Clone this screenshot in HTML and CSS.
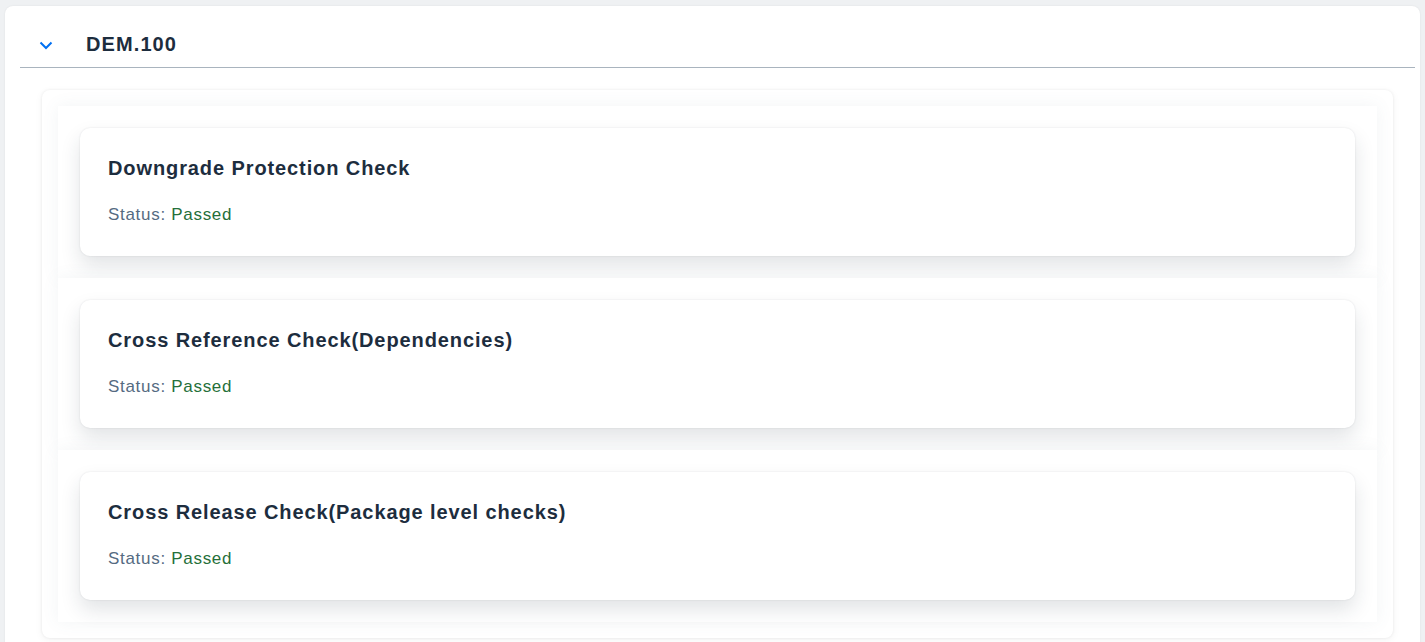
FILE: index.html
```html
<!DOCTYPE html>
<html>
<head>
<meta charset="utf-8">
<link rel="stylesheet" href="styles.css">
</head>
<body>
<div class="panel">
  <div class="header">
    <span class="chev"><svg width="14" height="10" viewBox="0 0 14 10"><path d="M1.5 2.5 L7 8 L12.5 2.5" fill="none" stroke="#0070f2" stroke-width="2"/></svg></span>
    <span class="title">DEM.100</span>
  </div>
  <div class="list">
    <div class="item">
      <div class="card">
        <div class="card-title">Downgrade Protection Check</div>
        <div class="status">Status: <span class="ok">Passed</span></div>
      </div>
    </div>
    <div class="item">
      <div class="card">
        <div class="card-title">Cross Reference Check(Dependencies)</div>
        <div class="status">Status: <span class="ok">Passed</span></div>
      </div>
    </div>
    <div class="item">
      <div class="card">
        <div class="card-title">Cross Release Check(Package level checks)</div>
        <div class="status">Status: <span class="ok">Passed</span></div>
      </div>
    </div>
  </div>
</div>
</body>
</html>
```
FILE: styles.css
```css
html, body {
  margin: 0;
  padding: 0;
  background: #eff1f3;
  font-family: "Liberation Sans", Arial, sans-serif;
  color: #1d2d3e;
  height: 642px;
  overflow: hidden;
}
body {
  padding: 6px 5px 0 5px;
}
.panel {
  background: #ffffff;
  border-radius: 8px;
  box-shadow: 0 0 2px rgba(0,0,0,0.08);
  padding: 0 5px 20px 15px;
}
.header {
  display: flex;
  align-items: center;
  height: 46px;
  padding-top: 15px;
  border-bottom: 1px solid #a9b4be;
}
.chev {
  display: flex;
  width: 22px;
  margin-left: 19px;
  margin-top: 1px;
}
.title {
  margin-left: 25px;
  font-size: 20px;
  font-weight: bold;
  letter-spacing: 1.1px;
  color: #1d2d3e;
}
.list {
  margin: 22px 22px 0 22px;
  padding: 16px;
  background: #fff;
  border-radius: 8px;
  box-shadow: 0 0 3px rgba(0,0,0,0.07), 0 2px 8px rgba(0,0,0,0.05);
  display: flex;
  flex-direction: column;
}
.item {
  padding: 22px;
  background: #fff;
  box-shadow: 0 0 16px rgba(90,110,130,0.08);
}
.card {
  background: #fff;
  border-radius: 10px;
  padding: 27px 28px 28px 28px;
  box-shadow: 0 0 2px rgba(30,45,60,0.12), 0 10px 20px rgba(30,45,60,0.13);
  height: 73px;
}
.card-title {
  font-size: 20px;
  font-weight: bold;
  letter-spacing: 0.9px;
  color: #1d2d3e;
  line-height: 26px;
}
.status {
  margin-top: 23px;
  font-size: 17px;
  letter-spacing: 0.7px;
  color: #556b82;
  line-height: 22px;
}
.ok {
  color: #256f3a;
}
```
